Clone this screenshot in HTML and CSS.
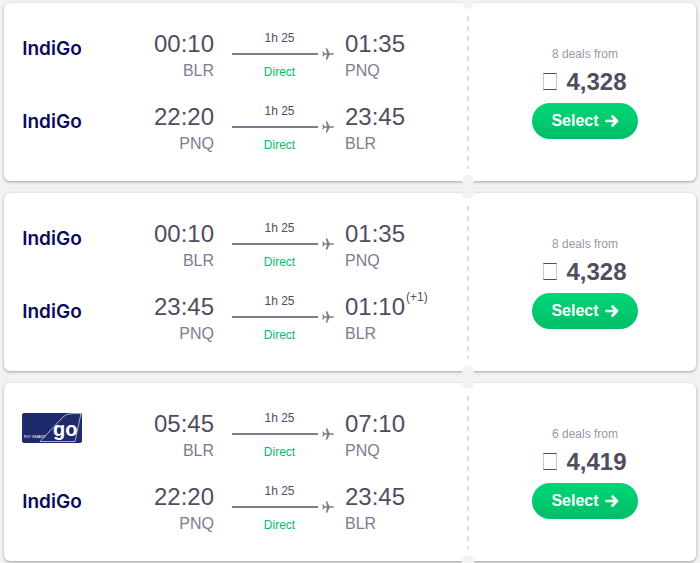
FILE: index.html
```html
<!DOCTYPE html>
<html lang="en">
<head>
    <meta charset="utf-8">
    <title>Flights BLR - PNQ</title>
    <meta name="viewport" content="width=device-width, initial-scale=1.0">
    <link rel="stylesheet" href="styles.css">
</head>
<body>
    <!-- shared icons -->
    <svg class="sprite" aria-hidden="true">
        <symbol id="plane" viewBox="0 0 12 12">
            <path d="M12 6c0-.5-.5-.8-1.200-.8H7.600L5.100.3H3.700l1.300 4.900H2.500L1.300 3.600H.3L.9 6 .3 8.400h1l1.200-1.600H5l-1.300 4.900h1.400l2.500-4.900h3.200c.7 0 1.200-.3 1.200-.8z"/>
        </symbol>
        <symbol id="arrow" viewBox="0 0 14 12">
            <path d="M1.500 6h10.500M7.500 1.500L12 6l-4.500 4.500" fill="none" stroke="currentColor" stroke-width="2.600" stroke-linecap="round" stroke-linejoin="round"/>
        </symbol>
    </svg>

    <main class="results">
        <article class="ticket">
            <div class="legs">
                <div class="leg">
                    <div class="logo indigo">IndiGo</div>
                    <div class="stop origin"><div class="time">00:10</div><div class="code">BLR</div></div>
                    <div class="route">
                        <div class="duration">1h 25</div>
                        <div class="track"><span class="line"></span><svg class="plane"><use href="#plane"/></svg></div>
                        <div class="direct">Direct</div>
                    </div>
                    <div class="stop"><div class="time">01:35</div><div class="code">PNQ</div></div>
                </div>
                <div class="leg">
                    <div class="logo indigo">IndiGo</div>
                    <div class="stop origin"><div class="time">22:20</div><div class="code">PNQ</div></div>
                    <div class="route">
                        <div class="duration">1h 25</div>
                        <div class="track"><span class="line"></span><svg class="plane"><use href="#plane"/></svg></div>
                        <div class="direct">Direct</div>
                    </div>
                    <div class="stop"><div class="time">23:45</div><div class="code">BLR</div></div>
                </div>
            </div>
            <div class="tear"></div>
            <div class="deal">
                <div class="deals-from">8 deals from</div>
                <div class="price"><span class="currency" role="img" aria-label="Rupees"></span>4,328</div>
                <button class="select" type="button">Select <svg class="arrow"><use href="#arrow"/></svg></button>
            </div>
        </article>

        <article class="ticket">
            <div class="legs">
                <div class="leg">
                    <div class="logo indigo">IndiGo</div>
                    <div class="stop origin"><div class="time">00:10</div><div class="code">BLR</div></div>
                    <div class="route">
                        <div class="duration">1h 25</div>
                        <div class="track"><span class="line"></span><svg class="plane"><use href="#plane"/></svg></div>
                        <div class="direct">Direct</div>
                    </div>
                    <div class="stop"><div class="time">01:35</div><div class="code">PNQ</div></div>
                </div>
                <div class="leg">
                    <div class="logo indigo">IndiGo</div>
                    <div class="stop origin"><div class="time">23:45</div><div class="code">PNQ</div></div>
                    <div class="route">
                        <div class="duration">1h 25</div>
                        <div class="track"><span class="line"></span><svg class="plane"><use href="#plane"/></svg></div>
                        <div class="direct">Direct</div>
                    </div>
                    <div class="stop"><div class="time">01:10<span class="next-day">(+1)</span></div><div class="code">BLR</div></div>
                </div>
            </div>
            <div class="tear"></div>
            <div class="deal">
                <div class="deals-from">8 deals from</div>
                <div class="price"><span class="currency" role="img" aria-label="Rupees"></span>4,328</div>
                <button class="select" type="button">Select <svg class="arrow"><use href="#arrow"/></svg></button>
            </div>
        </article>

        <article class="ticket">
            <div class="legs">
                <div class="leg">
                    <svg class="logo" viewBox="0 0 60 30" role="img" aria-label="Go Air">
                        <rect width="60" height="30" rx="2" fill="#1f2a6d"/>
                        <path d="M18 28.500L41 4Q44 1 48 .8L59 .5 53 28.500z" fill="none" stroke="#aab0d0" stroke-width="1"/>
                        <text class="go-tag" x="2" y="25">FLY SMART</text>
                        <text class="go-name" x="31" y="23">go</text>
                    </svg>
                    <div class="stop origin"><div class="time">05:45</div><div class="code">BLR</div></div>
                    <div class="route">
                        <div class="duration">1h 25</div>
                        <div class="track"><span class="line"></span><svg class="plane"><use href="#plane"/></svg></div>
                        <div class="direct">Direct</div>
                    </div>
                    <div class="stop"><div class="time">07:10</div><div class="code">PNQ</div></div>
                </div>
                <div class="leg">
                    <div class="logo indigo">IndiGo</div>
                    <div class="stop origin"><div class="time">22:20</div><div class="code">PNQ</div></div>
                    <div class="route">
                        <div class="duration">1h 25</div>
                        <div class="track"><span class="line"></span><svg class="plane"><use href="#plane"/></svg></div>
                        <div class="direct">Direct</div>
                    </div>
                    <div class="stop"><div class="time">23:45</div><div class="code">BLR</div></div>
                </div>
            </div>
            <div class="tear"></div>
            <div class="deal">
                <div class="deals-from">6 deals from</div>
                <div class="price"><span class="currency" role="img" aria-label="Rupees"></span>4,419</div>
                <button class="select" type="button">Select <svg class="arrow"><use href="#arrow"/></svg></button>
            </div>
        </article>
    </main>
</body>
</html>
```
FILE: styles.css
```css
* {
    box-sizing: border-box;
}

body {
    margin: 0;
    background: #f2f2f5;
    color: #524c61;
    font-family: "Liberation Sans", Arial, sans-serif;
}

.sprite {
    display: none;
}

.results {
    display: flex;
    flex-direction: column;
    gap: 12px;
    padding: 3px 4px 2px;
}

.ticket {
    display: flex;
    background: #fff;
    border-radius: 6px;
    box-shadow: 0 1px 3px rgba(0, 0, 0, 0.35);
}

.legs {
    flex: 1;
    display: flex;
    flex-direction: column;
    gap: 19px;
    padding: 26px 18px 25px;
}

.leg {
    display: grid;
    grid-template-columns: 60px 11fr 109px 9fr;
    column-gap: 11px;
}

.logo {
    width: 60px;
    height: 30px;
    margin-top: 4px;
}

.indigo {
    color: #0a0a5c;
    font-family: Inter, sans-serif;
    font-size: 19px;
    font-weight: 600;
    line-height: 32px;
    text-align: center;
}

.go-tag {
    fill: #fff;
    font-size: 4px;
}

.go-name {
    fill: #fff;
    font-size: 20px;
    font-weight: 700;
}

.origin {
    text-align: right;
}

.time {
    font-size: 24px;
    line-height: 30px;
    white-space: nowrap;
}

.next-day {
    margin-left: 1px;
    font-size: 12px;
    line-height: 8px;
    vertical-align: 14px;
}

.code {
    color: #817b8f;
    font-size: 16px;
    line-height: 24px;
}

.route {
    padding-top: 1px;
    font-size: 12px;
    line-height: 16px;
    text-align: center;
}

.track {
    display: flex;
    align-items: center;
    gap: 4px;
    height: 16px;
    margin: 0 0 2px 7px;
}

.line {
    flex: 1;
    height: 2px;
    background: #817b8f;
}

.plane {
    width: 12px;
    height: 12px;
    fill: #817b8f;
}

.direct {
    color: #00bd68;
}

/* dashed tear line with a notch punched at each end */
.tear {
    position: relative;
    width: 12px;
    padding: 13px 5px 12px;
    background: repeating-linear-gradient(#dddde3 0 5px, #fff 5px 10px) content-box;
}

.tear::before,
.tear::after {
    content: "";
    position: absolute;
    left: 0;
    width: 12px;
    height: 12px;
    border-radius: 50%;
    background: #f2f2f5;
}

.tear::before {
    top: -6px;
}

.tear::after {
    bottom: -6px;
}

.deal {
    display: flex;
    flex-direction: column;
    align-items: center;
    width: 222px;
    padding: 43px 0 42px;
}

.deals-from {
    margin-bottom: 6px;
    color: #9a95a5;
    font-size: 12px;
    line-height: 16px;
}

.price {
    margin-bottom: 7px;
    font-size: 24px;
    font-weight: 700;
    line-height: 28px;
}

.currency {
    display: inline-block;
    width: 14px;
    height: 17px;
    margin-right: 9px;
    border: 1px solid #524c61;
    border-left-color: #a5d3e8;
    border-right-color: #d8bfb3;
}

.select {
    display: flex;
    align-items: center;
    gap: 6px;
    height: 36px;
    padding: 0 19px;
    border: 0;
    border-radius: 18px;
    background: linear-gradient(#00d775, #00bd68);
    color: #fff;
    font: 700 16px/20px "Liberation Sans", Arial, sans-serif;
    cursor: pointer;
}

.arrow {
    width: 14px;
    height: 12px;
}
```
